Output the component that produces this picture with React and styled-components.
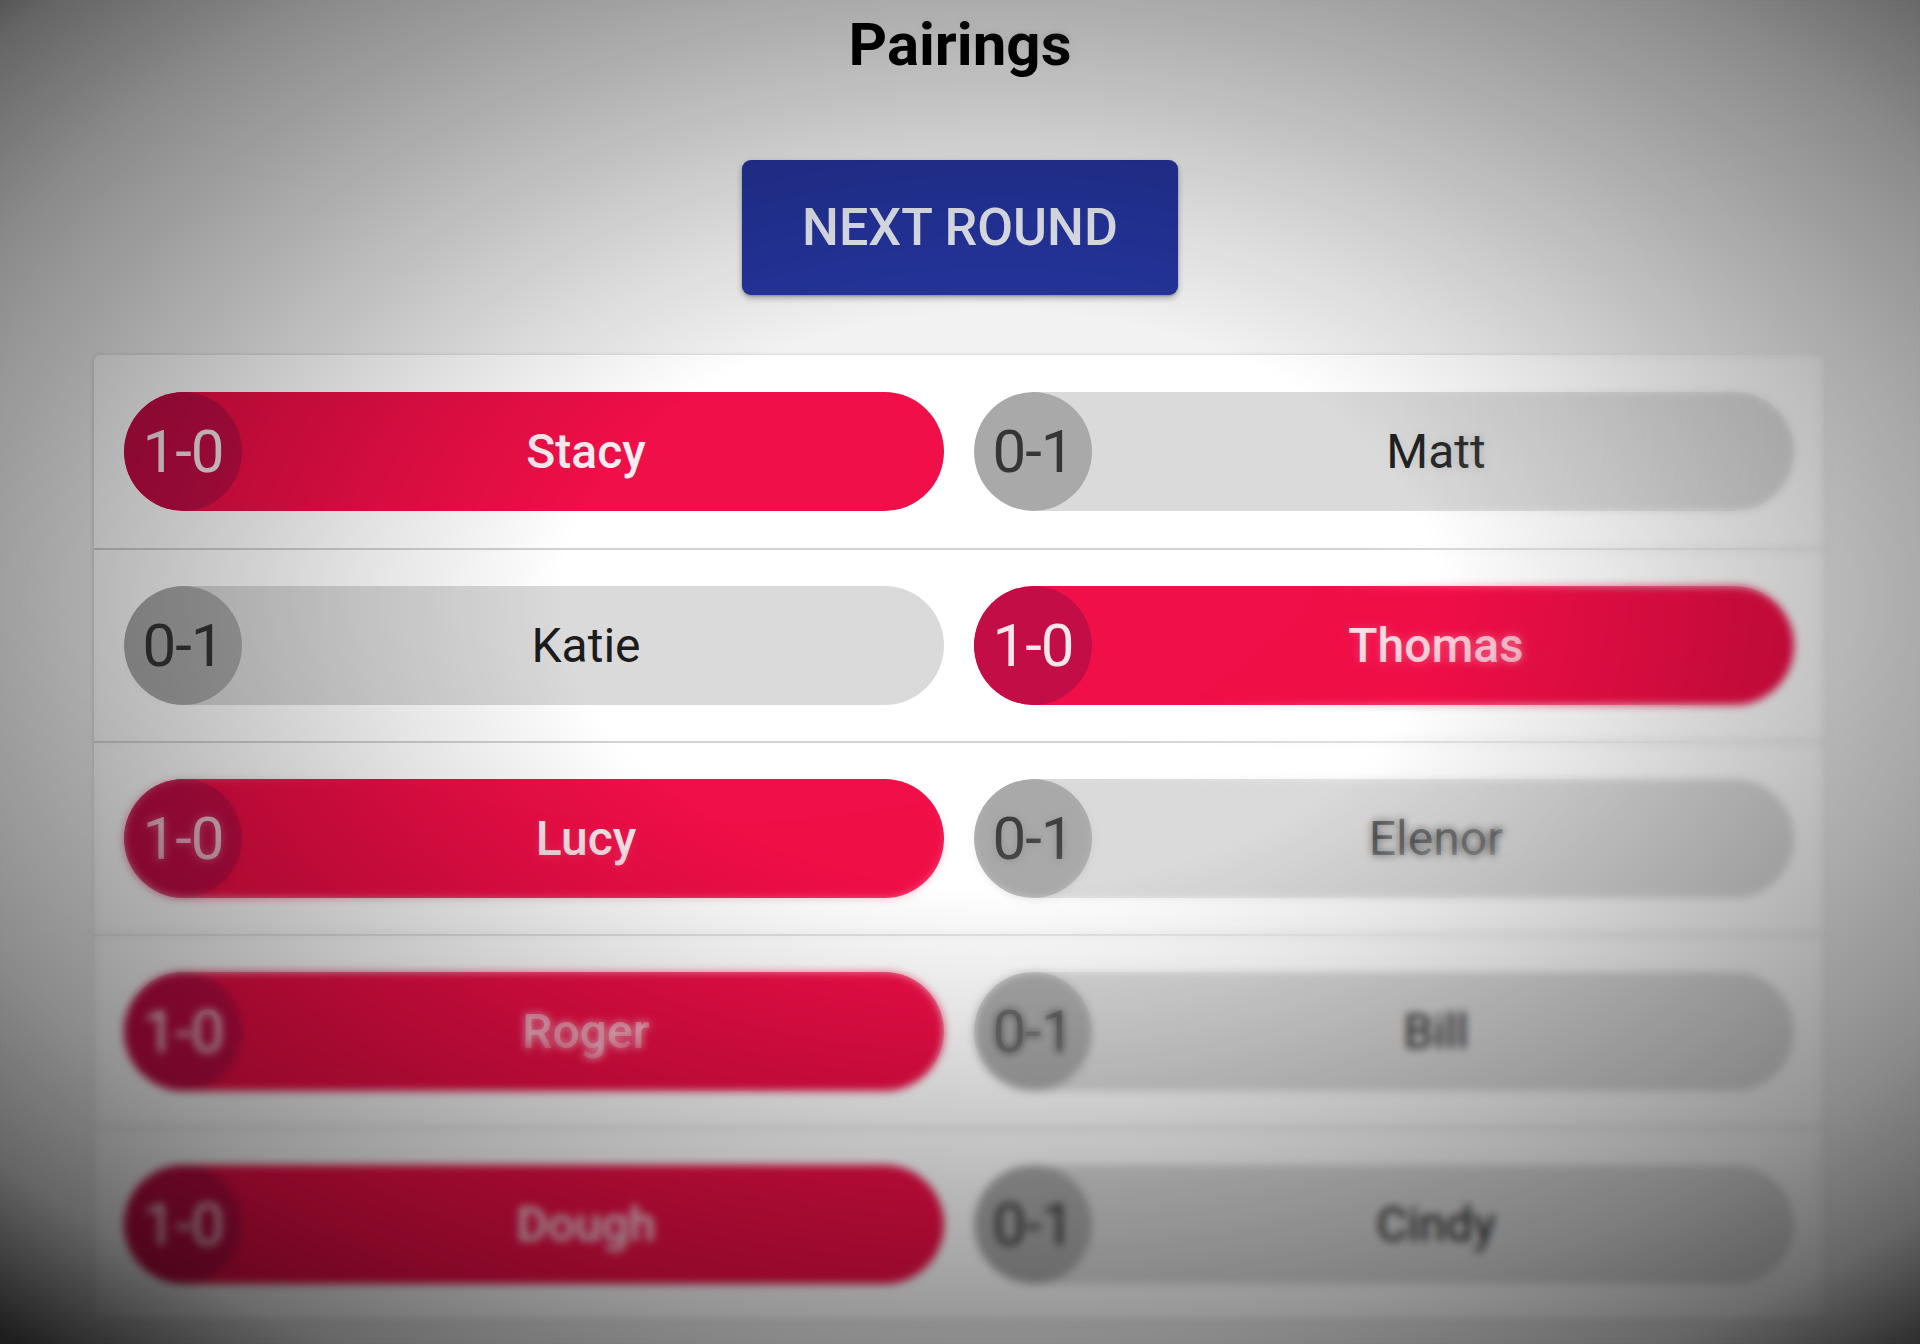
import React from 'react';
import styled, { createGlobalStyle } from 'styled-components';

const pairings = [
  [{ name: 'Stacy', win: true }, { name: 'Matt', win: false }],
  [{ name: 'Katie', win: false }, { name: 'Thomas', win: true }],
  [{ name: 'Lucy', win: true }, { name: 'Elenor', win: false }],
  [{ name: 'Roger', win: true }, { name: 'Bill', win: false }],
  [{ name: 'Dough', win: true }, { name: 'Cindy', win: false }],
];

const App = () => {
  return (
    <Page>
      <GlobalStyle />
      <Title>Pairings</Title>
      <NextButton>NEXT ROUND</NextButton>
      <Card>
        {pairings.map((pair, i) => (
          <Row key={i}>
            {pair.map((player) => (
              <Pill key={player.name} win={player.win}>
                <Score win={player.win}>{player.win ? '1-0' : '0-1'}</Score>
                <Name win={player.win}>{player.name}</Name>
              </Pill>
            ))}
          </Row>
        ))}
      </Card>
      <Blur />
      <Vignette />
    </Page>
  );
};

export default App;

const GlobalStyle = createGlobalStyle`
  * {
    box-sizing: border-box;
  }
  body {
    margin: 0;
    background: #f2f2f2;
    font-family: Roboto, 'Liberation Sans', sans-serif;
    overflow: hidden;
  }
`;

const Page = styled.div`
  min-height: 1344px;
  display: flex;
  flex-direction: column;
  align-items: center;
  padding-top: 9px;
  background: #f2f2f2;
`;

const Title = styled.h1`
  margin: 0;
  font-size: 60px;
  line-height: 1.2;
  font-weight: 700;
  color: #000;
`;

const NextButton = styled.button`
  margin-top: 79px;
  width: 436px;
  height: 135px;
  border: none;
  border-radius: 9px;
  background: #24349b;
  color: #e4e6ee;
  font-family: Roboto, 'Liberation Sans', sans-serif;
  font-size: 52px;
  font-weight: 500;
  box-shadow: 0 3px 6px rgba(0, 0, 0, 0.3), 0 1px 2px rgba(0, 0, 0, 0.2);
`;

const Card = styled.div`
  margin-top: 60px;
  align-self: stretch;
  margin-left: 94px;
  margin-right: 96px;
  background: #fff;
  border-radius: 6px;
  box-shadow: 0 1px 5px rgba(0, 0, 0, 0.22);
`;

const Row = styled.div`
  display: grid;
  grid-template-columns: 1fr 1fr;
  gap: 30px;
  height: 193px;
  align-items: center;
  padding: 0 30px;
  & + & {
    border-top: 2px solid #d2d2d2;
  }
`;

const Pill = styled.div`
  display: flex;
  align-items: center;
  height: 119px;
  border-radius: 60px;
  background: ${(p) => (p.win ? '#f00f48' : '#dadada')};
  overflow: hidden;
`;

const Score = styled.div`
  width: 118px;
  height: 119px;
  flex-shrink: 0;
  border-radius: 50%;
  display: flex;
  align-items: center;
  justify-content: center;
  background: ${(p) => (p.win ? '#c20d46' : '#a9a9a9')};
  color: ${(p) => (p.win ? '#f6e6ec' : '#353535')};
  font-size: 60px;
  letter-spacing: -1px;
`;

const Name = styled.div`
  flex: 1;
  text-align: center;
  padding-right: 14px;
  font-size: 48px;
  font-weight: ${(p) => (p.win ? 500 : 400)};
  color: ${(p) => (p.win ? '#fbeef2' : '#1c1c1c')};
`;

const Blur = styled.div`
  position: fixed;
  inset: 0;
  pointer-events: none;
  backdrop-filter: blur(4px);
  -webkit-mask-image: radial-gradient(
    ellipse 1100px 650px at 700px 420px,
    transparent 62%,
    black 105%
  );
  mask-image: radial-gradient(
    ellipse 1100px 650px at 700px 420px,
    transparent 62%,
    black 105%
  );
`;

const Vignette = styled.div`
  position: fixed;
  inset: 0;
  pointer-events: none;
  background: radial-gradient(
    ellipse 1250px 820px at 1000px 600px,
    rgba(0, 0, 0, 0) 35%,
    rgba(0, 0, 0, 0.1) 50%,
    rgba(0, 0, 0, 0.3) 75%,
    rgba(0, 0, 0, 0.42) 90%,
    rgba(0, 0, 0, 0.58) 105%,
    rgba(0, 0, 0, 0.88) 120%
  );
`;
